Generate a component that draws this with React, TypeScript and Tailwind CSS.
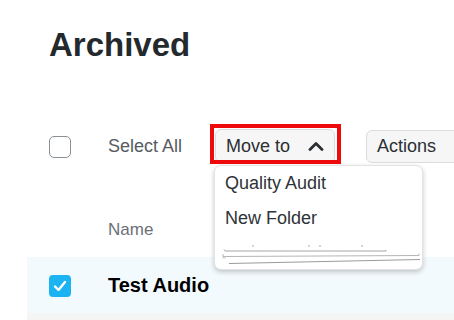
import React from "react";

function ChevronUp() {
  return (
    <svg width="16" height="10" viewBox="0 0 16 10" fill="none">
      <path d="M2 8.5L8 2.5L14 8.5" stroke="#2b2f33" strokeWidth="2.8" strokeLinecap="round" strokeLinejoin="round" />
    </svg>
  );
}

export default function App() {
  return (
    <div
      className="relative w-[454px] h-[320px] overflow-hidden bg-white"
      style={{ fontFamily: '"Liberation Sans", Arial, sans-serif' }}
    >
      <div className="pl-[49px] pt-[28px]">
        <h1 className="text-[33px] leading-[33px] h-[33px] font-bold text-[#24292e]">Archived</h1>
      </div>

      <div className="mt-[68px] flex items-center h-[34px] pl-[49px] whitespace-nowrap">
        <div className="mt-[2px] w-[22px] h-[22px] rounded-[5px] border-[1.5px] border-[#8a9096] bg-white shrink-0" />
        <span className="ml-[37px] w-[107px] shrink-0 text-[18px] leading-none text-[#565b61]">Select All</span>
        <div className="relative shrink-0">
          <button className="flex items-center justify-between w-[120px] h-[34px] pl-[10px] pr-[10px] rounded-[6px] border border-[#dcdcdc] bg-[#f6f6f6] text-[18px] leading-none text-[#2b2f33]">
            <span>Move to</span>
            <ChevronUp />
          </button>
          <div className="absolute left-[-5px] top-[-5px] right-[-6px] bottom-[-1px] border-[4px] border-[#ee0a0a] pointer-events-none z-20" />
          <div className="absolute left-[-1px] top-[36px] w-[209px] h-[105px] rounded-[7px] bg-white border border-[#e3e3e3] shadow-[0_2px_5px_rgba(0,0,0,0.22)] z-10 pt-[8px] pl-[10px]">
            <div className="text-[18px] leading-[18px] h-[35px] text-[#2e3338]">Quality Audit</div>
            <div className="text-[18px] leading-[18px] h-[35px] text-[#2e3338]">New Folder</div>
            <svg className="absolute left-0 top-0" width="209" height="105" viewBox="0 0 209 105" fill="none">
              <circle cx="38" cy="80" r="0.8" fill="#9a9a9a" />
              <circle cx="94" cy="80" r="0.8" fill="#9a9a9a" />
              <circle cx="105" cy="80" r="0.8" fill="#9a9a9a" />
              <circle cx="147" cy="80" r="0.8" fill="#9a9a9a" />
              <path d="M9 83.5 L10 85 L171 85 L171 84" stroke="#8f8f8f" strokeWidth="0.8" />
              <path d="M8 88 L8 90.5 L204 89.5 L204 87.5" stroke="#a2a2a2" strokeWidth="0.8" />
              <path d="M14 97.5 L205 93.5" stroke="#8f8f8f" strokeWidth="0.9" />
              <path d="M7 92 L11 92" stroke="#b5b5b5" strokeWidth="0.7" />
            </svg>
          </div>
        </div>
        <button className="ml-[31px] shrink-0 flex items-center w-[120px] h-[33px] pl-[10px] rounded-[6px] border border-[#dcdcdc] bg-[#f6f6f6] text-[18px] leading-none text-[#2b2f33]">
          Actions
        </button>
      </div>

      <div className="mt-[58px] pl-[108px] h-[17px] text-[17px] leading-[17px] text-[#6b7076]">Name</div>

      <div className="mt-[19px] ml-[27px] h-[56px] bg-[#f3fafd] flex items-center pl-[22px]">
        <div className="w-[22px] h-[22px] rounded-[4px] bg-[#1bb3f2] flex items-center justify-center shrink-0 mt-[2px]">
          <svg width="14" height="12" viewBox="0 0 14 12" fill="none">
            <path d="M2 6.5L5.5 10L12 2" stroke="white" strokeWidth="2.4" strokeLinecap="round" strokeLinejoin="round" />
          </svg>
        </div>
        <span className="ml-[37px] text-[20px] leading-none font-bold text-black">Test Audio</span>
      </div>
      <div className="ml-[27px] h-[10px] bg-[#f5f5f5]" />
    </div>
  );
}
